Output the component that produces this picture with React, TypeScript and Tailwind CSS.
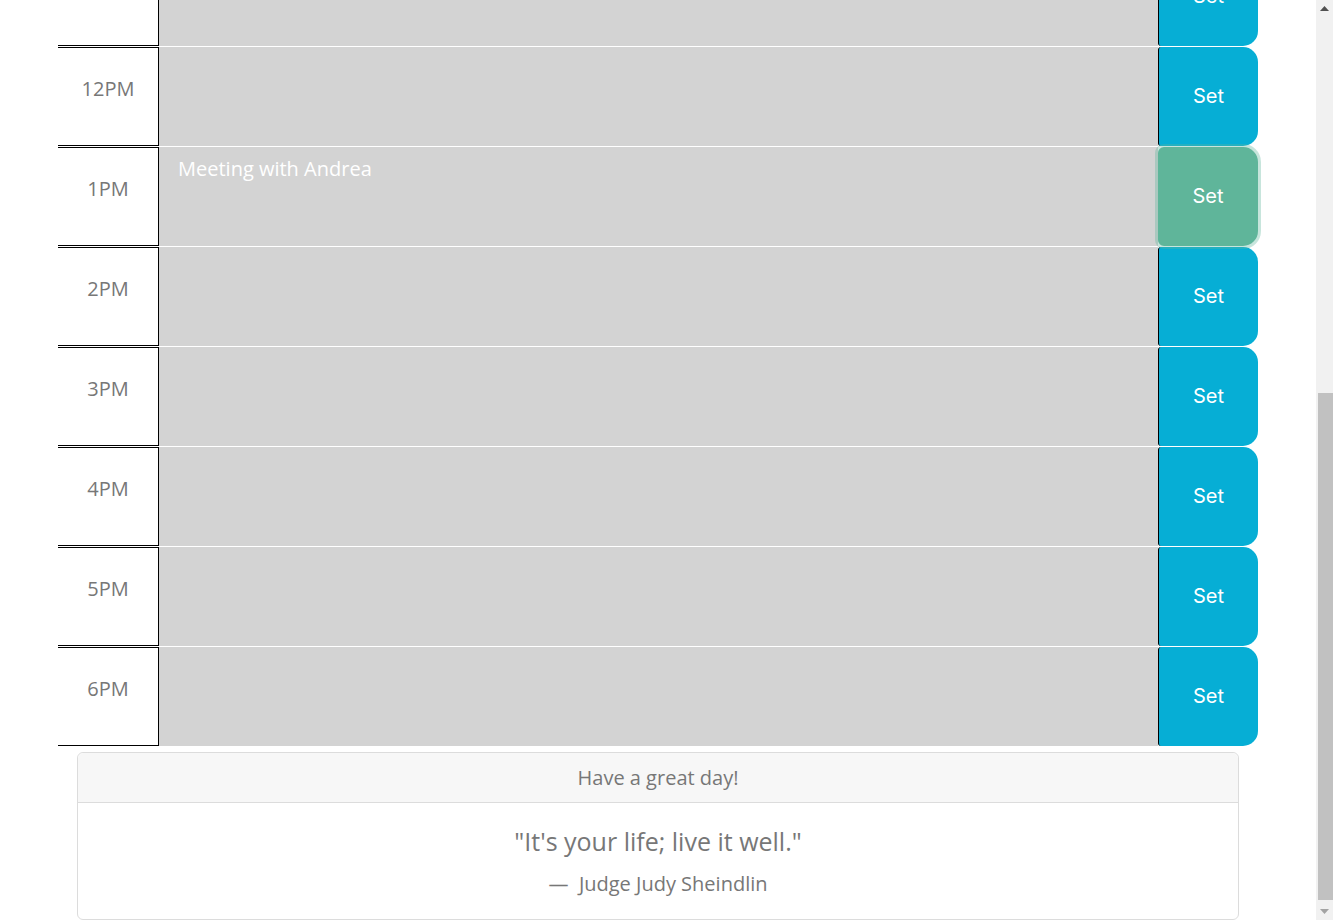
import React from "react"

const hours = [
    { label: "11AM", text: "" },
    { label: "12PM", text: "" },
    { label: "1PM", text: "Meeting with Andrea", focused: true },
    { label: "2PM", text: "" },
    { label: "3PM", text: "" },
    { label: "4PM", text: "" },
    { label: "5PM", text: "" },
    { label: "6PM", text: "" },
]

function HourRow({ label, text, focused, first }: { label: string; text: string; focused?: boolean; first?: boolean }) {
    return (
        <div className={"flex h-[100px] border-t border-white " + (first ? "-mt-[54px]" : "")}>
            <div className="w-[101px] shrink-0 bg-white border-y border-r border-black pt-[26px] text-center text-[20px] leading-[30px] text-[#777]">
                {label}
            </div>
            <textarea
                className="flex-1 resize-none bg-[#d3d3d3] px-[19px] py-[7px] text-[20px] leading-[30px] text-white outline-none"
                defaultValue={text}
            />
            {focused ? (
                <button className="relative z-10 w-[100px] shrink-0 rounded-l-[6px] rounded-r-[15px] bg-[#5fb59a] pb-[2px] font-['Inter',sans-serif] text-[20px] text-white shadow-[0_0_0_3px_rgba(95,181,154,0.35)]">
                    Set
                </button>
            ) : (
                <button className="w-[100px] shrink-0 rounded-l-[3px] rounded-r-[15px] border-l border-black bg-[#06aed5] pb-[2px] font-['Inter',sans-serif] text-[20px] text-white">
                    Set
                </button>
            )}
        </div>
    )
}

function Scrollbar() {
    return (
        <div className="flex w-[17px] shrink-0 flex-col bg-[#f1f1f1]">
            <div className="flex h-[17px] items-center justify-center">
                <svg width="9" height="5" viewBox="0 0 9 5"><polygon points="0,5 4.5,0 9,5" fill="#505050" /></svg>
            </div>
            <div className="flex-1">
                <div className="ml-[2px] mt-[376px] h-[507px] bg-[#c1c1c1]" />
            </div>
            <div className="flex h-[17px] items-center justify-center">
                <svg width="9" height="5" viewBox="0 0 9 5"><polygon points="0,0 4.5,5 9,0" fill="#a3a3a3" /></svg>
            </div>
        </div>
    )
}

export default function App() {
    return (
        <div className="flex h-[920px] overflow-hidden bg-white font-['Open_Sans',sans-serif]">
            <main className="flex-1 overflow-hidden">
                <div className="mx-auto w-[1200px]">
                    {hours.map((h, i) => (
                        <HourRow key={h.label} label={h.label} text={h.text} focused={h.focused} first={i === 0} />
                    ))}
                </div>

                <div className="mx-auto mt-[6px] w-[1162px] rounded-[6px] border border-[#dcdcdc] text-center text-[#777]">
                    <div className="flex h-[50px] items-center justify-center rounded-t-[6px] border-b border-[#dcdcdc] bg-[#f7f7f7] text-[20px]">
                        Have a great day!
                    </div>
                    <div className="px-5 pt-[20px] pb-5">
                        <p className="text-[25px] leading-[37px]">"It's your life; live it well."</p>
                        <p className="mt-[9px] text-[20px] leading-[30px]">&mdash;&nbsp; Judge Judy Sheindlin</p>
                    </div>
                </div>
            </main>
            <Scrollbar />
        </div>
    )
}
